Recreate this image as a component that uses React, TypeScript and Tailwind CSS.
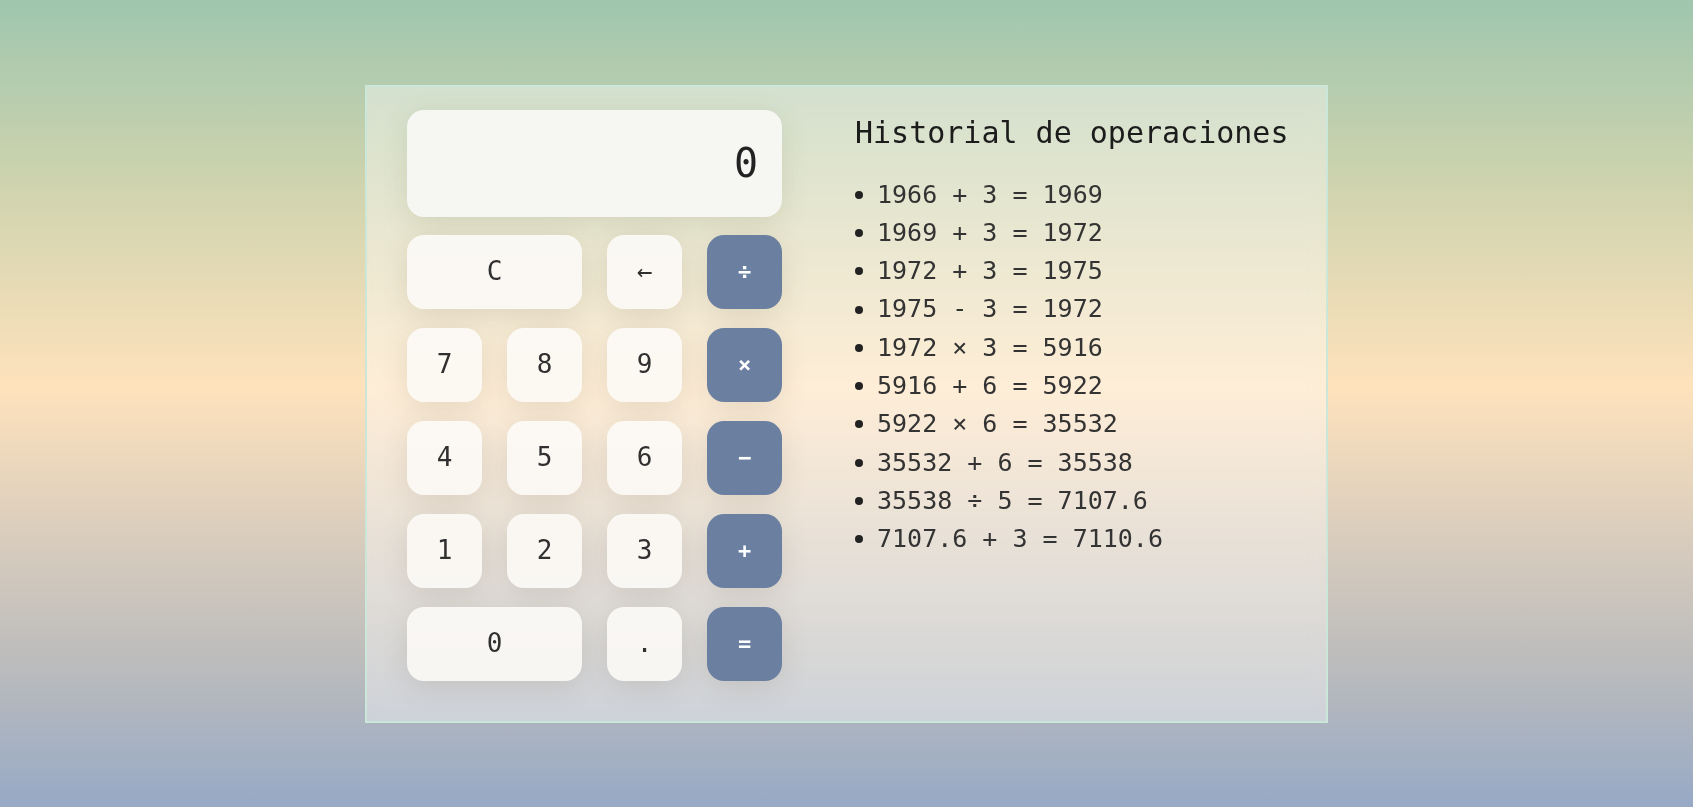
import React from "react"

const mono = "font-['DejaVu_Sans_Mono','Liberation_Mono',monospace]"

const history = [
  "1966 + 3 = 1969",
  "1969 + 3 = 1972",
  "1972 + 3 = 1975",
  "1975 - 3 = 1972",
  "1972 × 3 = 5916",
  "5916 + 6 = 5922",
  "5922 × 6 = 35532",
  "35532 + 6 = 35538",
  "35538 ÷ 5 = 7107.6",
  "7107.6 + 3 = 7110.6",
]

type Key = { label: string; op?: boolean; wide?: boolean }

const keys: Key[] = [
  { label: "C", wide: true },
  { label: "←" },
  { label: "÷", op: true },
  { label: "7" },
  { label: "8" },
  { label: "9" },
  { label: "×", op: true },
  { label: "4" },
  { label: "5" },
  { label: "6" },
  { label: "−", op: true },
  { label: "1" },
  { label: "2" },
  { label: "3" },
  { label: "+", op: true },
  { label: "0", wide: true },
  { label: "." },
  { label: "=", op: true },
]

function CalcKey({ k }: { k: Key }) {
  const base =
    "h-[74px] rounded-[17px] flex items-center justify-center shadow-[0_6px_28px_rgba(90,80,60,0.14)]"
  if (k.op) {
    return (
      <button className={`${base} bg-[#6b7fa0] text-white text-[22px] font-bold`}>
        {k.label}
      </button>
    )
  }
  return (
    <button
      className={`${base} ${k.wide ? "col-span-2" : ""} bg-[#fcfaf6]/90 text-[#303030] text-[26px]`}
    >
      {k.label}
    </button>
  )
}

export default function App() {
  return (
    <div
      className={`min-h-screen w-full flex items-center justify-center bg-[linear-gradient(180deg,#9fc6ae_0%,#cdd3ae_22%,#fee2bc_48%,#d6cbbd_68%,#bcbcbc_82%,#97a9c6_100%)] ${mono}`}
    >
      {/* Panel */}
      <div className="w-[963px] h-[638px] border-2 border-[#cbe7da] bg-white/40 backdrop-blur-sm flex pt-[23px] pl-[40px]">
        {/* Calculator */}
        <div className="w-[375px] flex flex-col">
          <div className="h-[107px] rounded-[17px] bg-[#f6f7f2] flex items-center justify-end pr-[24px] text-[40px] text-[#222] shadow-[0_6px_28px_rgba(90,90,60,0.14)]">
            0
          </div>
          <div className="mt-[18px] grid grid-cols-4 gap-x-[25px] gap-y-[19px]">
            {keys.map((k, i) => (
              <CalcKey key={i} k={k} />
            ))}
          </div>
        </div>

        {/* History */}
        <div className="ml-[73px] pt-[5px]">
          <h2 className="text-[30px] leading-[36px] text-[#1c1c1c] font-normal">
            Historial de operaciones
          </h2>
          <ul className="mt-[25px]">
            {history.map((h, i) => (
              <li key={i} className="flex items-center text-[25px] leading-[38.3px] text-[#333]">
                <span className="w-[8px] h-[8px] rounded-full bg-[#222] mr-[14px] shrink-0" />
                <span className="whitespace-pre">{h}</span>
              </li>
            ))}
          </ul>
        </div>
      </div>
    </div>
  )
}
